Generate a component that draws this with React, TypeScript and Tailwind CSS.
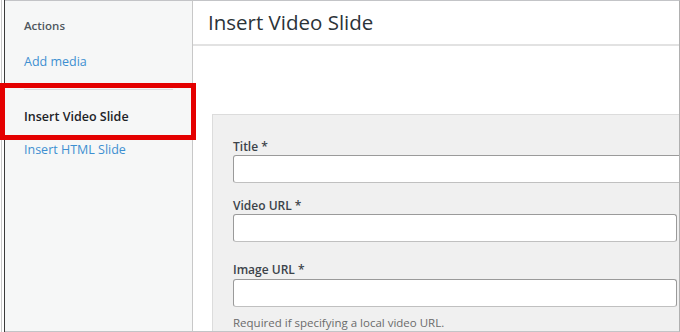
import React from "react";

function Field({ label, top, gap, full }: { label: string; top: string; gap: string; full?: boolean }) {
  return (
    <div className={top}>
      <div className="text-[12px] font-semibold text-[#3c434a] leading-[16px]">{label}</div>
      <div
        className={
          gap +
          " h-[28px] bg-white rounded-[3px] border border-[#9a9a9a] border-b-[#c0c0c0] " +
          (full ? "w-[480px]" : "w-[444px]")
        }
      />
    </div>
  );
}

export default function App() {
  return (
    <div
      className="relative w-[680px] h-[332px] overflow-hidden bg-white flex"
      style={{ fontFamily: '"Open Sans", "Noto Sans", sans-serif' }}
    >
      {/* outer frame lines */}
      <div className="flex shrink-0 w-[5px] h-full">
        <div className="w-[1px] h-full bg-white" />
        <div className="w-[1px] h-full bg-[#c8c8c8]" />
        <div className="w-[2px] h-full bg-white" />
        <div className="w-[1px] h-full bg-[#3a3a3a]" />
      </div>

      {/* sidebar */}
      <div className="shrink-0 w-[188px] h-full bg-[#f6f7f7] border-r border-r-[#c8c8c8] border-t border-t-[#c3c4c7] border-b border-b-[#c3c4c7] pl-[19px] pr-[19px]">
        <div className="pt-[16px] text-[11.5px] font-semibold text-[#50575e] leading-[18px]">Actions</div>
        <div className="mt-[18px] text-[12.5px] text-[#3d8fd1] leading-[18px]">Add media</div>
        <div className="mt-[18px] h-px bg-[#dcdcde]" />
        <div className="mt-[18px] text-[12.5px] font-semibold text-[#1d2327] leading-[18px]">Insert Video Slide</div>
        <div className="mt-[15px] text-[12.5px] text-[#3d8fd1] leading-[18px]">Insert HTML Slide</div>
      </div>

      {/* main */}
      <div className="flex-1 min-w-0 h-full flex flex-col border-t border-[#c3c4c7] border-r border-r-[#b0b0b0] border-b border-b-[#c3c4c7]">
        <div className="shrink-0 h-[45px] border-b-2 border-[#e2e2e2] pl-[15px] flex items-center">
          <div className="text-[20.5px] text-[#2c3338] font-medium leading-[26px] pb-[1px]">Insert Video Slide</div>
        </div>
        <div className="shrink-0 h-[68px]" />
        <div className="flex-1 ml-[19px] bg-[#f0f0f0] border-t border-l border-[#dcdcdc] pl-[20px] overflow-hidden">
          <Field label="Title *" top="pt-[24px]" gap="mt-0" full />
          <Field label="Video URL *" top="pt-[15px]" gap="mt-0" />
          <Field label="Image URL *" top="pt-[20px]" gap="mt-[1px]" />
          <div className="mt-[8px] text-[11.5px] text-[#6b6b6b] leading-[16px] whitespace-nowrap">Required if specifying a local video URL.</div>
        </div>
      </div>

      {/* red highlight */}
      <div className="absolute left-0 top-[83px] w-[196px] h-[57px] border-[5px] border-[#e40000]" />
    </div>
  );
}
